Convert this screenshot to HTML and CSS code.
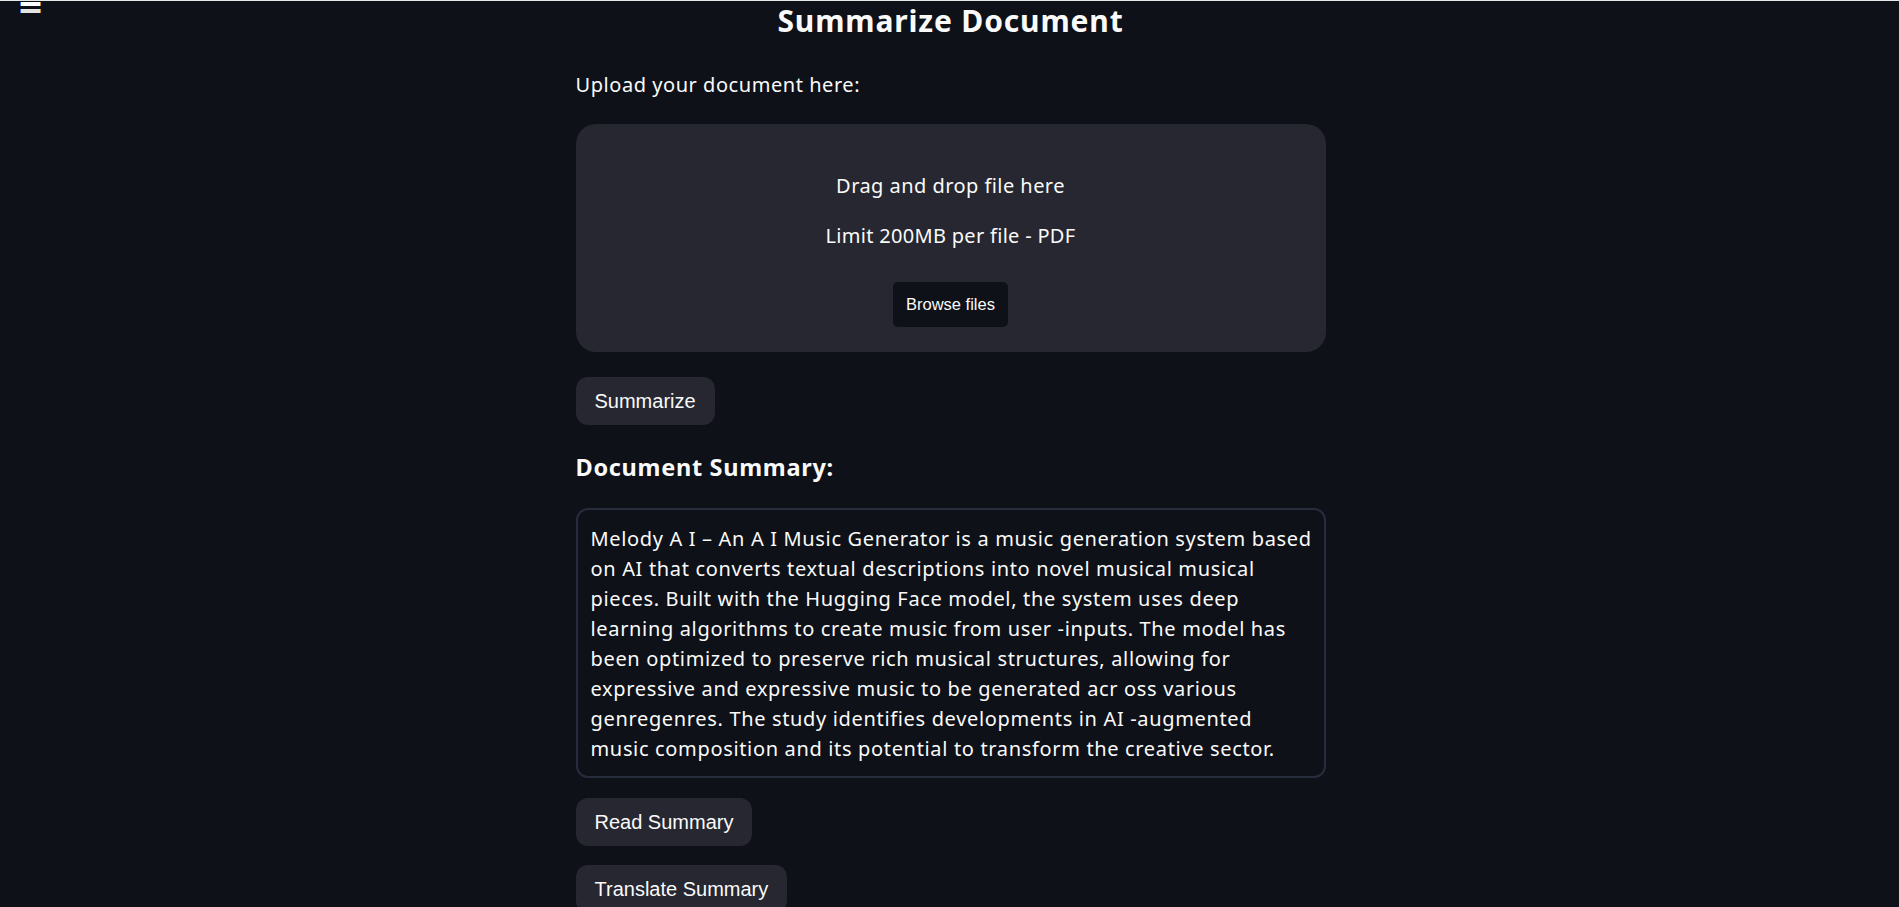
FILE: index.html
```html
<!DOCTYPE html>
<html lang="en">
<head>
<meta charset="utf-8">
<title>Summarize Document</title>
<link rel="stylesheet" href="styles.css">
</head>
<body>
<div class="menu-toggle" aria-label="menu">
  <span class="bar"></span>
  <span class="bar bar-2"></span>
</div>
<main class="page">
  <h1 class="title">Summarize Document</h1>
  <p class="label">Upload your document here:</p>
  <section class="dropzone">
    <p class="drop-text">Drag and drop file here</p>
    <p class="drop-limit">Limit 200MB per file - PDF</p>
    <button class="browse-btn">Browse files</button>
  </section>
  <div class="btn-row"><button class="btn">Summarize</button></div>
  <h2 class="subtitle">Document Summary:</h2>
  <div class="summary">
    <span class="line">Melody A I – An A I Music Generator is a music generation system based</span>
    <span class="line">on AI that converts textual descriptions into novel musical musical</span>
    <span class="line">pieces. Built with the Hugging Face model, the system uses deep</span>
    <span class="line">learning algorithms to create music from user -inputs. The model has</span>
    <span class="line">been optimized to preserve rich musical structures, allowing for</span>
    <span class="line">expressive and expressive music to be generated acr oss various</span>
    <span class="line">genregenres. The study identifies developments in AI -augmented</span>
    <span class="line">music composition and its potential to transform the creative sector.</span>
  </div>
  <div class="btn-row btn-row-read"><button class="btn">Read Summary</button></div>
  <div class="btn-row btn-row-translate"><button class="btn">Translate Summary</button></div>
</main>
</body>
</html>
```
FILE: styles.css
```css
* { box-sizing: border-box; }
html, body { margin: 0; padding: 0; }
body {
  background: #0e1117;
  color: #fafafa;
  font-family: "Noto Sans", "Open Sans", sans-serif;
  border-top: 1px solid #e6e6e6;
  min-height: 1000px;
}
.menu-toggle {
  position: absolute;
  left: 20px;
  top: 2px;
  width: 21px;
  display: flex;
  flex-direction: column;
  gap: 3px;
}
.bar {
  display: block;
  height: 4px;
  background: #ffffff;
  border-left: 1px solid #2f6fe0;
  border-right: 1px solid #c9862c;
}
.bar-2 { background: #e4e4e4; }
.page {
  width: 750px;
  margin: 0 0 0 calc(50% - 374px);
  display: flex;
  flex-direction: column;
}
.title {
  margin: 0;
  font-size: 30px;
  font-weight: 700;
  line-height: 40px;
  letter-spacing: 0.85px;
  text-align: center;
}
.label {
  margin: 30px 0 0;
  font-size: 20px;
  line-height: 28px;
  letter-spacing: 0.55px;
}
.dropzone {
  margin-top: 25px;
  height: 228px;
  background: #262730;
  border-radius: 20px;
  padding: 48px 0 25px;
  display: flex;
  flex-direction: column;
  align-items: center;
}
.drop-text, .drop-limit {
  margin: 0;
  font-size: 20px;
  line-height: 28px;
  letter-spacing: 0.45px;
}
.drop-limit { margin-top: 22px; letter-spacing: 0.3px; }
.browse-btn {
  margin-top: 32px;
  width: 115px;
  height: 45px;
  background: #0e1117;
  color: #fafafa;
  border: none;
  border-radius: 5px;
  font-family: "Liberation Sans", Arial, sans-serif;
  font-size: 16.5px;
  padding: 0;
}
.btn-row { display: flex; margin-top: 25px; }
.btn {
  height: 48px;
  padding: 0 19px;
  background: #262730;
  color: #fafafa;
  border: none;
  border-radius: 12px;
  font-family: "Liberation Sans", Arial, sans-serif;
  font-size: 20px;
  display: inline-flex;
  align-items: center;
}
.subtitle {
  margin: 26px 0 0;
  font-size: 23.5px;
  font-weight: 700;
  line-height: 32px;
  letter-spacing: 0.7px;
}
.summary {
  margin-top: 25px;
  border: 2px solid #272d3d;
  border-radius: 12px;
  padding: 14px 13px 12px;
  font-size: 20px;
  line-height: 30px;
  letter-spacing: 0.66px;
}
.line { display: block; white-space: nowrap; }
.btn-row-read { margin-top: 20px; }
.btn-row-translate { margin-top: 19px; }
```
